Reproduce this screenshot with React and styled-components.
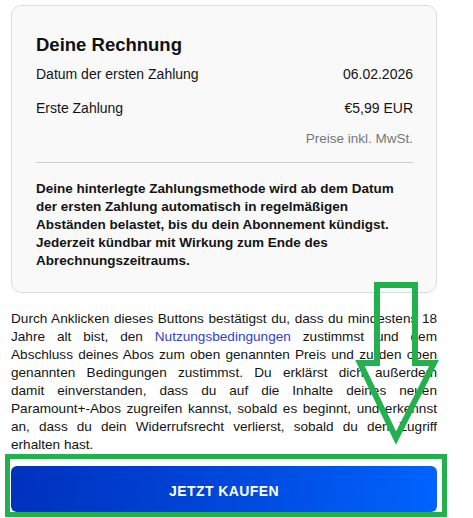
import React from "react";
import styled, { createGlobalStyle } from "styled-components";

const GlobalStyle = createGlobalStyle`
  html, body { margin: 0; padding: 0; background: #ffffff; }
  body { font-family: "Liberation Sans", Arial, sans-serif; color: #141414; }
`;

const Page = styled.div`
  position: relative;
  width: 473px;
  height: 518px;
  box-sizing: border-box;
  padding: 5px 36px 0 11px;
  overflow: hidden;
`;

const Card = styled.section`
  background: #f9f9f9;
  border: 1px solid #dcdcdc;
  border-radius: 10px;
  padding: 27px 23px 22px 24px;
`;

const Title = styled.h2`
  margin: 0;
  font-size: 18.5px;
  line-height: 24px;
  font-weight: 700;
  color: #111;
`;

const Row = styled.div`
  display: flex;
  justify-content: space-between;
  font-size: 14px;
  line-height: 20px;
  margin-top: ${(p) => p.$gap}px;
`;

const Note = styled.div`
  margin-top: 12px;
  text-align: right;
  font-size: 13.5px;
  line-height: 18px;
  color: #777;
`;

const Divider = styled.hr`
  border: 0;
  border-top: 1px solid #cfcfcf;
  margin: 14px 0 0;
`;

const Strong = styled.p`
  margin: 17px 0 0;
  font-size: 13.5px;
  line-height: 18px;
  font-weight: 700;
`;

const Legal = styled.p`
  margin: 17px 0 0;
  font-size: 13.6px;
  line-height: 18px;
  text-align: justify;
`;

const Line = styled.span`
  display: block;
  text-align-last: ${(p) => (p.$last ? "left" : "justify")};
`;

const Link = styled.a`
  color: #3340d2;
  text-decoration: none;
`;

const BuyButton = styled.button`
  display: block;
  width: 100%;
  height: 46px;
  margin-top: 12px;
  padding: 4px 0 0;
  border: 0;
  border-radius: 6px;
  background: linear-gradient(100deg, #0031bd 0%, #0047db 50%, #0064ff 100%);
  color: #fff;
  font-family: "Liberation Sans", Arial, sans-serif;
  font-size: 14px;
  font-weight: 700;
  letter-spacing: 0.4px;
  cursor: pointer;
`;

const Annotation = styled.svg`
  position: absolute;
  left: 0;
  top: 0;
  pointer-events: none;
`;

const legalLines = [
  "Durch Anklicken dieses Buttons bestätigst du, dass du mindestens 18",
  null,
  "Abschluss deines Abos zum oben genannten Preis und zu den oben",
  "genannten Bedingungen zustimmst. Du erklärst dich außerdem",
  "damit einverstanden, dass du auf die Inhalte deines neuen",
  "Paramount+-Abos zugreifen kannst, sobald es beginnt, und erkennst",
  "an, dass du dein Widerrufsrecht verlierst, sobald du den Zugriff",
  "erhalten hast.",
];

export default function App() {
  return (
    <>
      <GlobalStyle />
      <Page>
        <Card>
          <Title>Deine Rechnung</Title>
          <Row $gap={7}>
            <span>Datum der ersten Zahlung</span>
            <span>06.02.2026</span>
          </Row>
          <Row $gap={14}>
            <span>Erste Zahlung</span>
            <span>€5,99 EUR</span>
          </Row>
          <Note>Preise inkl. MwSt.</Note>
          <Divider />
          <Strong>
            Deine hinterlegte Zahlungsmethode wird ab dem Datum der ersten Zahlung
            automatisch in regelmäßigen Abständen belastet, bis du dein Abonnement
            kündigst. Jederzeit kündbar mit Wirkung zum Ende des
            Abrechnungszeitraums.
          </Strong>
        </Card>
        <Legal>
          {legalLines.map((text, i) =>
            text === null ? (
              <Line key={i}>
                Jahre alt bist, den <Link href="#">Nutzungsbedingungen</Link> zustimmst und dem
              </Line>
            ) : (
              <Line key={i} $last={i === legalLines.length - 1}>
                {text}
              </Line>
            )
          )}
        </Legal>
        <BuyButton>JETZT KAUFEN</BuyButton>
        <Annotation width="473" height="518" viewBox="0 0 473 518">
          <path
            d="M377 285 V363 H360 L396 438 L434 363 H415 V285 Z"
            fill="none"
            stroke="#22b14c"
            strokeWidth="6"
            strokeLinejoin="miter"
          />
          <rect x="7.5" y="456.5" width="437" height="58" fill="none" stroke="#22b14c" strokeWidth="5" />
        </Annotation>
      </Page>
    </>
  );
}
